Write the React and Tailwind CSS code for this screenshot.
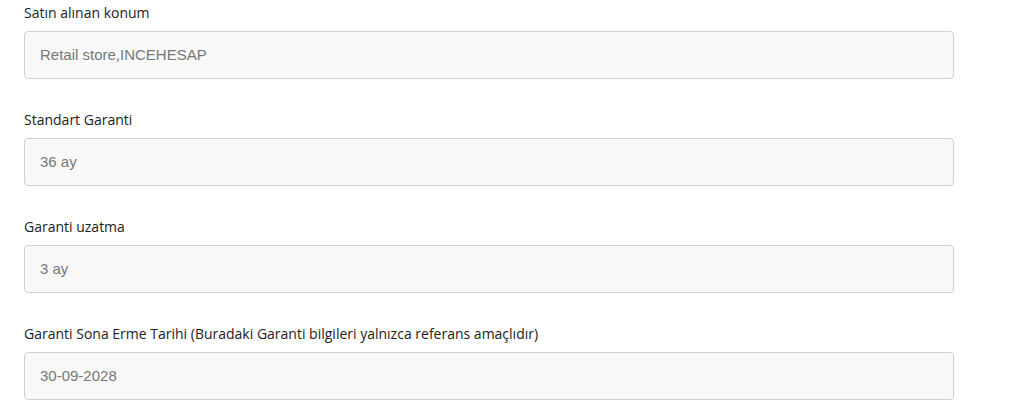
import React from "react";

const fields = [
    { label: "Satın alınan konum", value: "Retail store,INCEHESAP" },
    { label: "Standart Garanti", value: "36 ay" },
    { label: "Garanti uzatma", value: "3 ay" },
    {
        label: "Garanti Sona Erme Tarihi (Buradaki Garanti bilgileri yalnızca referans amaçlıdır)",
        value: "30-09-2028",
    },
];

export default function App() {
    return (
        <div className="bg-white w-[1014px] h-[407px] overflow-hidden pl-6 pt-[3px]">
            <div className="w-[930px] flex flex-col gap-[31px]">
                {fields.map((field) => (
                    <div key={field.label} className="flex flex-col gap-[8px]">
                        <label className="text-[14px] leading-[20px] text-[#222] font-['Open_Sans',sans-serif]">
                            {field.label}
                        </label>
                        <div className="h-[48px] flex items-center px-[15px] border border-[#d0d0d0] rounded bg-[#f9f9f9] text-[15px] text-[#777] font-['Liberation_Sans',Arial,sans-serif]">
                            {field.value}
                        </div>
                    </div>
                ))}
            </div>
        </div>
    );
}
